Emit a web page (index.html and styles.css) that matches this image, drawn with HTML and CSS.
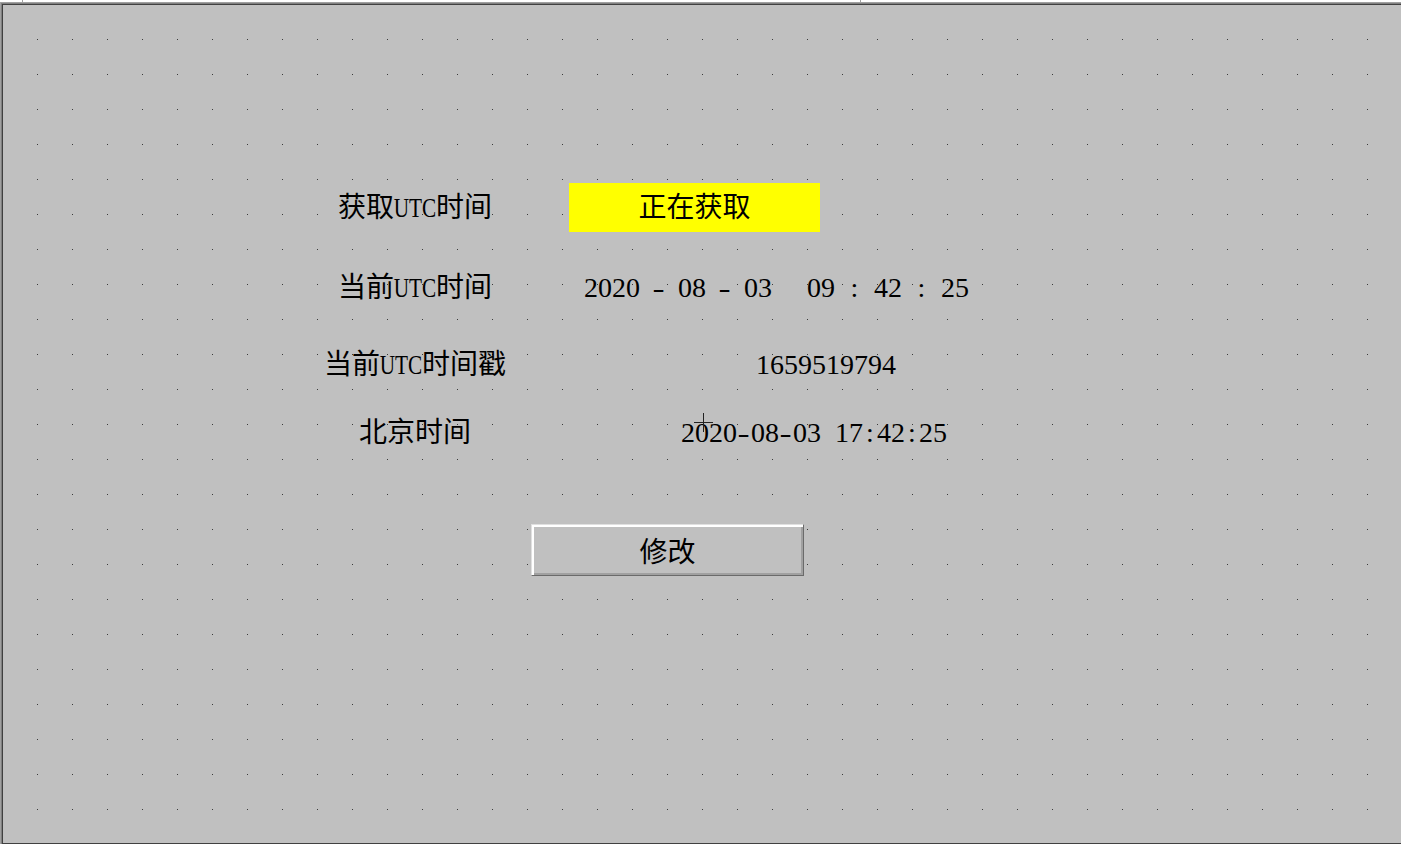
FILE: index.html
```html
<!DOCTYPE html>
<html lang="zh-CN">
<head>
<meta charset="utf-8">
<title>UTC时间</title>
<link rel="stylesheet" href="styles.css">
</head>
<body>
<div class="topbar"><span class="tick tick-a"></span><span class="tick tick-b"></span></div>
<div class="frame">
  <div class="panel">
    <div class="row row1">
      <div class="label">获取<span class="lat">UTC</span>时间</div>
      <div class="status">正在获取</div>
    </div>
    <div class="row row2">
      <div class="label">当前<span class="lat">UTC</span>时间</div>
      <div class="utc">
        <span class="num">2020</span><span class="sep"><span class="dash">-</span></span><span class="num">08</span><span class="sep"><span class="dash">-</span></span><span class="num">03</span><span class="gap"></span><span class="num">09</span><span class="colon">:</span><span class="num">42</span><span class="colon">:</span><span class="num">25</span>
      </div>
    </div>
    <div class="row row3">
      <div class="label">当前<span class="lat">UTC</span>时间戳</div>
      <div class="stamp">1659519794</div>
    </div>
    <div class="row row4">
      <div class="label">北京时间</div>
      <div class="bj">2020<span class="c"><span class="dash">-</span></span>08<span class="c"><span class="dash">-</span></span>03<span class="c"></span>17<span class="c">:</span>42<span class="c">:</span>25</div>
    </div>
    <div class="row row5">
      <button class="btn">修改</button>
    </div>
  </div>
  <div class="cursor"></div>
</div>
</body>
</html>
```
FILE: styles.css
```css
html, body {
  margin: 0;
  padding: 0;
  background: #ffffff;
  overflow: hidden;
}
body {
  width: 1401px;
  height: 844px;
  font-family: "Liberation Serif", "Noto Sans CJK SC", serif;
  color: #000;
}
.topbar {
  height: 2px;
  display: flex;
}
.tick {
  width: 1px;
  height: 2px;
  background: #a0a0a0;
}
.tick-a { margin-left: 22px; }
.tick-b { margin-left: 837px; }

.frame {
  position: relative;
  height: 842px;
  box-sizing: border-box;
  background-color: #c0c0c0;
  background-image: conic-gradient(from 270deg at 1px 1px, #3a3a3a 90deg, transparent 0);
  background-size: 35px 35px;
  background-position: 37px 37px;
  box-shadow: inset 1px 1px 0 #a0a0a0, inset 2px 2px 0 #808080, inset 3px 3px 0 #404040, inset 0 -1px 0 #404040;
}
.panel {
  padding-top: 181px;
  padding-left: 300px;
  display: flex;
  flex-direction: column;
}
.row {
  display: flex;
  align-items: center;
  height: 40px;
  font-size: 28px;
  line-height: 28px;
}
.row1 { height: 49px; }
.row2 { margin-top: 36px; }
.row3 { margin-top: 37px; }
.row4 { margin-top: 28px; }
.row5 { margin-top: 71px; height: 52px; }

.label {
  width: 230px;
  text-align: center;
  white-space: nowrap;
}
.lat {
  display: inline-block;
  transform: scaleX(0.76);
  margin: 0 -7px;
}
.status {
  margin-left: 39px;
  width: 251px;
  height: 49px;
  background: #ffff00;
  display: flex;
  align-items: center;
  justify-content: center;
}
.utc {
  margin-left: 54px;
  display: flex;
  align-items: center;
  white-space: nowrap;
}
.num { display: inline-block; }
.sep {
  display: inline-block;
  width: 38px;
  text-align: center;
}
.dash {
  display: inline-block;
  transform: scaleX(1.3);
}
.colon {
  display: inline-block;
  width: 39px;
  text-align: center;
}
.gap {
  display: inline-block;
  width: 35px;
}
.stamp {
  margin-left: 226px;
  white-space: nowrap;
}
.bj {
  margin-left: 151px;
  white-space: nowrap;
}
.c {
  display: inline-block;
  width: 14px;
  text-align: center;
}
.btn {
  margin-left: 231px;
  width: 273px;
  height: 52px;
  box-sizing: border-box;
  background: #c0c0c0;
  border: 1px solid;
  border-color: #e0e0e0 #6a6a6a #6a6a6a #e0e0e0;
  box-shadow: inset 2px 2px 0 #ffffff, inset -2px -2px 0 #a0a0a0;
  font-family: "Noto Sans CJK SC", sans-serif;
  font-size: 28px;
  line-height: 28px;
  color: #000;
  padding: 0;
}
.cursor {
  position: absolute;
  left: 694px;
  top: 411px;
  width: 19px;
  height: 19px;
  background:
    linear-gradient(#222, #222) 9px 0 / 1px 19px no-repeat,
    linear-gradient(#222, #222) 0 9px / 19px 1px no-repeat;
}
```
